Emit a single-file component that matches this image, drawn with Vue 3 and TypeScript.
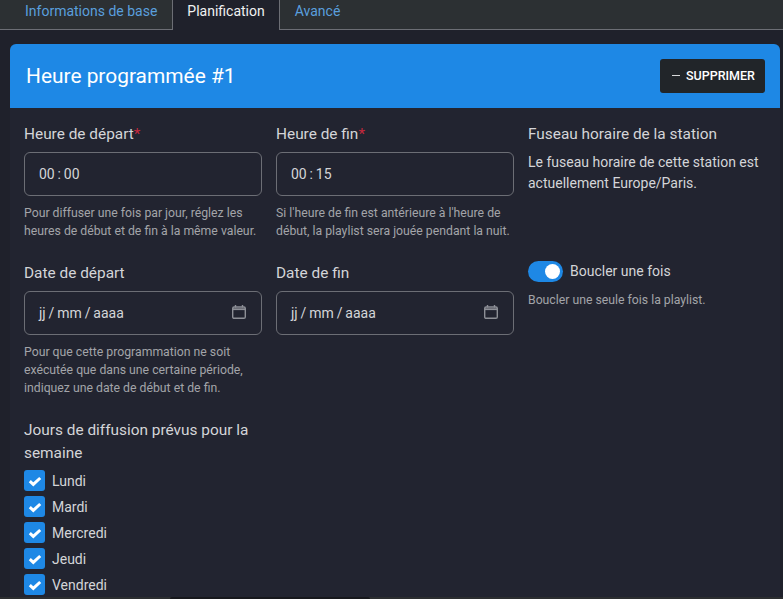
<script setup lang="ts">
const days = ['Lundi', 'Mardi', 'Mercredi', 'Jeudi', 'Vendredi']
</script>

<template>
  <div class="page">
    <nav class="tabs">
      <a class="tab">Informations de base</a>
      <a class="tab active">Planification</a>
      <a class="tab">Avancé</a>
    </nav>
    <section class="card">
      <header class="card-head">
        <h2>Heure programmée #1</h2>
        <button class="del"><span class="minus"></span>SUPPRIMER</button>
      </header>
      <div class="card-body">
        <div class="grid">
          <div class="field">
            <label>Heure de départ<i>*</i></label>
            <div class="input">00 : 00</div>
            <p class="hint">Pour diffuser une fois par jour, réglez les heures de début et de fin à la même valeur.</p>
          </div>
          <div class="field">
            <label>Heure de fin<i>*</i></label>
            <div class="input">00 : 15</div>
            <p class="hint">Si l'heure de fin est antérieure à l'heure de début, la playlist sera jouée pendant la nuit.</p>
          </div>
          <div class="field">
            <label>Fuseau horaire de la station</label>
            <p class="tz">Le fuseau horaire de cette station est actuellement Europe/Paris.</p>
          </div>

          <div class="field">
            <label>Date de départ</label>
            <div class="input date">
              <span>jj / mm / aaaa</span>
              <svg class="cal" width="14" height="14" viewBox="0 0 14 14" fill="none" stroke="#8d8f96" stroke-width="1.4">
                <rect x="0.7" y="2" width="12.6" height="11.3" rx="1.4" />
                <path d="M0.7 4.2h12.6" stroke-width="1.8" />
                <path d="M3.5 0v2.4M10.5 0v2.4" />
              </svg>
            </div>
            <p class="hint">Pour que cette programmation ne soit exécutée que dans une certaine période, indiquez une date de début et de fin.</p>
          </div>
          <div class="field">
            <label>Date de fin</label>
            <div class="input date">
              <span>jj / mm / aaaa</span>
              <svg class="cal" width="14" height="14" viewBox="0 0 14 14" fill="none" stroke="#8d8f96" stroke-width="1.4">
                <rect x="0.7" y="2" width="12.6" height="11.3" rx="1.4" />
                <path d="M0.7 4.2h12.6" stroke-width="1.8" />
                <path d="M3.5 0v2.4M10.5 0v2.4" />
              </svg>
            </div>
          </div>
          <div class="field loop">
            <div class="switch-row">
              <span class="switch"><span class="knob"></span></span>
              <span class="switch-label">Boucler une fois</span>
            </div>
            <p class="hint">Boucler une seule fois la playlist.</p>
          </div>

          <div class="field days-field">
            <label class="days-label">Jours de diffusion prévus pour la semaine</label>
            <div class="days">
              <div v-for="d in days" :key="d" class="day">
                <span class="check">
                  <svg width="14" height="14" viewBox="0 0 14 14" fill="none" stroke="#fff" stroke-width="3">
                    <path d="M1.8 7.2l3.5 3.2 6.9-6.4" />
                  </svg>
                </span>
                <span>{{ d }}</span>
              </div>
            </div>
          </div>
        </div>
      </div>
    </section>
    <div class="bottom"><span class="pill"></span></div>
  </div>
</template>

<style>
html, body { margin: 0; background: #1f212b; overflow: hidden; }
</style>

<style scoped>
.page {
  position: relative;
  width: 783px;
  height: 599px;
  overflow: hidden;
  background: #1f212b;
  font-family: Roboto, sans-serif;
  color: #d4d5d8;
}
.tabs {
  display: flex;
  height: 29px;
  padding-left: 10px;
  background: #2c3033;
  border-bottom: 1px solid #6c6e75;
  box-sizing: content-box;
}
.tab {
  padding: 0 14px;
  height: 22px;
  line-height: 22px;
  font-size: 14px;
  color: #5a9fdd;
  border: 1px solid transparent;
  border-top: 0;
}
.tab.active {
  height: 30px;
  color: #f0f1f2;
  background: #1f212b;
  border-color: #6c6e75;
  border-bottom: 0;
}
.card {
  margin: 14px 3px 0 10px;
  background: #222430;
  border-radius: 6px 6px 0 0;
  height: 555px;
  overflow: hidden;
}
.card-head {
  display: flex;
  align-items: center;
  justify-content: space-between;
  height: 64px;
  padding: 0 15px 0 16px;
  background: #1e88e5;
}
.card-head h2 {
  margin: 0;
  font-size: 20.9px;
  font-weight: 400;
  color: #fff;
}
.del {
  display: flex;
  align-items: center;
  height: 34px;
  padding: 0 10px 1px 12px;
  border: 0;
  border-radius: 3px;
  background: #212529;
  color: #fff;
  font: 500 12.5px Roboto, sans-serif;
}
.minus {
  width: 8px;
  height: 1px;
  margin-right: 6px;
  background: #d8d9da;
}
.card-body {
  padding: 14px 14px 0;
}
.grid {
  display: grid;
  grid-template-columns: repeat(3, 238px);
  column-gap: 14px;
}
.field {
  padding-bottom: 21px;
  min-width: 0;
}
label {
  display: block;
  font-size: 15.4px;
  line-height: 24px;
  margin-bottom: 6px;
  color: #d4d5d8;
}
label i {
  font-style: normal;
  color: #c6283d;
}
.input {
  display: flex;
  align-items: center;
  justify-content: space-between;
  box-sizing: border-box;
  height: 44px;
  padding: 0 15px 0 14px;
  border: 1px solid #6c6e75;
  border-radius: 6px;
  font-size: 14px;
  word-spacing: -0.6px;
  color: #d4d5d8;
}
.cal {
  margin-top: -2px;
}
.hint {
  margin: 8px 0 0;
  font-size: 12.25px;
  line-height: 18px;
  color: #a3a4a9;
}
.tz {
  margin: 0;
  font-size: 14px;
  line-height: 21px;
}
.switch-row {
  display: flex;
  align-items: center;
  height: 24px;
  margin-top: -2px;
  margin-bottom: 4px;
}
.switch {
  position: relative;
  width: 35px;
  height: 21px;
  margin-right: 7px;
  border-radius: 11px;
  background: #1e88e5;
}
.knob {
  position: absolute;
  right: 3px;
  top: 3px;
  width: 15px;
  height: 15px;
  border-radius: 50%;
  background: #fff;
}
.switch-label {
  font-size: 14px;
}
.days-field {
  margin-top: 1px;
}
.days-label {
  line-height: 23px;
  margin-bottom: 5px;
}
.days {
  display: flex;
  flex-direction: column;
  gap: 5px;
}
.day {
  display: flex;
  align-items: center;
  gap: 7px;
  height: 21px;
  font-size: 14px;
}
.check {
  display: flex;
  align-items: center;
  justify-content: center;
  width: 21px;
  height: 21px;
  border-radius: 3px;
  background: #1e88e5;
}
.bottom {
  position: absolute;
  left: 0;
  right: 0;
  bottom: 0;
  height: 2px;
  background: #2c2e30;
}
.pill {
  position: absolute;
  left: 170px;
  width: 200px;
  height: 2px;
  border-radius: 2px 2px 0 0;
  background: #17181c;
}
</style>
